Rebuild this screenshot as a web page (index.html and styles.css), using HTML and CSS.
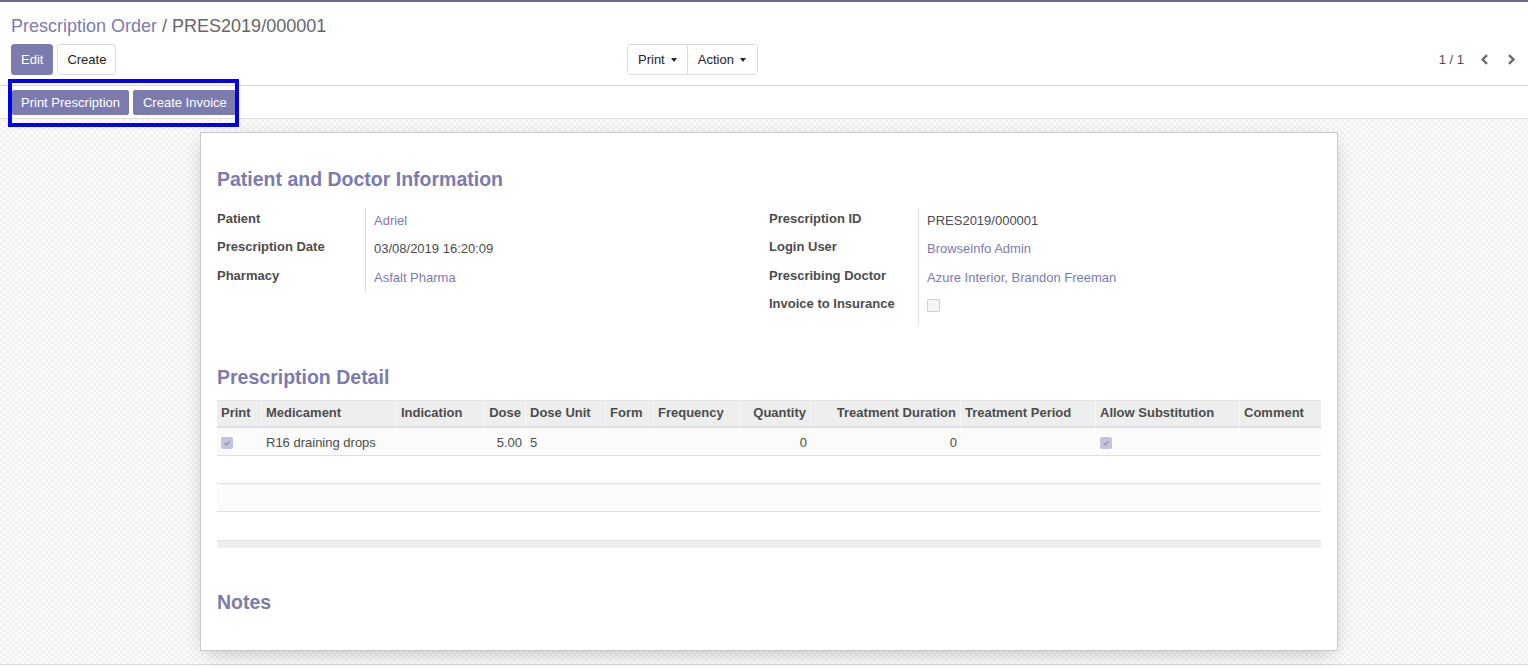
FILE: index.html
```html
<!DOCTYPE html>
<html lang="en">
<head>
<meta charset="utf-8">
<title>Prescription Order</title>
<link rel="stylesheet" href="styles.css">
</head>
<body>
<div class="control-panel">
  <div class="breadcrumb"><span class="bc-link">Prescription Order</span> / PRES2019/000001</div>
  <div class="cp-bottom">
    <div class="cp-buttons">
      <button class="btn btn-primary">Edit</button>
      <button class="btn btn-secondary">Create</button>
    </div>
    <div class="cp-sidebar">
      <button class="btn-dd">Print<span class="caret"></span></button>
      <button class="btn-dd">Action<span class="caret"></span></button>
    </div>
    <div class="pager">
      <span class="pager-value">1 / 1</span>
      <button class="pager-btn" aria-label="Previous"><svg width="9" height="11" viewBox="0 0 9 11"><path d="M7 1.2 L2.6 5.5 L7 9.8" fill="none" stroke="#6a6a6a" stroke-width="2.4"/></svg></button>
      <button class="pager-btn" aria-label="Next"><svg width="9" height="11" viewBox="0 0 9 11"><path d="M2 1.2 L6.4 5.5 L2 9.8" fill="none" stroke="#6a6a6a" stroke-width="2.4"/></svg></button>
    </div>
  </div>
</div>
<div class="statusbar">
  <button class="btn-sm">Print Prescription</button>
  <button class="btn-sm">Create Invoice</button>
</div>
<div class="highlight"></div>
<div class="form-area">
  <div class="sheet">
    <h2 class="section-title first">Patient and Doctor Information</h2>
    <div class="groups">
      <div class="group">
        <div class="g-label">Patient</div><div class="g-value link">Adriel</div>
        <div class="g-label">Prescription Date</div><div class="g-value">03/08/2019 16:20:09</div>
        <div class="g-label">Pharmacy</div><div class="g-value link">Asfalt Pharma</div>
      </div>
      <div class="group group-right">
        <div class="g-label">Prescription ID</div><div class="g-value">PRES2019/000001</div>
        <div class="g-label">Login User</div><div class="g-value link">Browseinfo Admin</div>
        <div class="g-label">Prescribing Doctor</div><div class="g-value link">Azure Interior, Brandon Freeman</div>
        <div class="g-label">Invoice to Insurance</div><div class="g-value"><span class="checkbox-empty"></span></div>
      </div>
    </div>
    <h2 class="section-title detail">Prescription Detail</h2>
    <table class="list">
      <colgroup>
        <col class="c-print"><col class="c-med"><col class="c-ind"><col class="c-dose"><col class="c-unit"><col class="c-form"><col class="c-freq"><col class="c-qty"><col class="c-dur"><col class="c-period"><col class="c-sub"><col class="c-comment">
      </colgroup>
      <thead>
        <tr>
          <th>Print</th><th>Medicament</th><th>Indication</th><th class="num">Dose</th><th>Dose Unit</th><th>Form</th><th>Frequency</th><th class="num">Quantity</th><th class="num">Treatment Duration</th><th>Treatment Period</th><th>Allow Substitution</th><th class="last">Comment</th>
        </tr>
      </thead>
      <tbody>
        <tr class="odd">
          <td><span class="checkbox-checked"><svg width="8" height="8" viewBox="0 0 8 8"><path d="M1.6 4.2 L3.3 5.8 L6.4 2.4" fill="none" stroke="#8c8bb8" stroke-width="1.2"/></svg></span></td>
          <td>R16 draining drops</td><td></td><td class="num">5.00</td><td>5</td><td></td><td></td><td class="num">0</td><td class="num">0</td><td></td>
          <td><span class="checkbox-checked"><svg width="8" height="8" viewBox="0 0 8 8"><path d="M1.6 4.2 L3.3 5.8 L6.4 2.4" fill="none" stroke="#8c8bb8" stroke-width="1.2"/></svg></span></td>
          <td></td>
        </tr>
        <tr><td colspan="12"></td></tr>
        <tr class="odd"><td colspan="12"></td></tr>
        <tr><td colspan="12"></td></tr>
      </tbody>
      <tfoot>
        <tr><td colspan="12"></td></tr>
      </tfoot>
    </table>
    <h2 class="section-title notes">Notes</h2>
  </div>
</div>
</body>
</html>
```

FILE: styles.css
```css
* { box-sizing: border-box; }

html, body {
  margin: 0;
  padding: 0;
  background: #ffffff;
}

body {
  font-family: "Liberation Sans", Arial, Helvetica, sans-serif;
  font-size: 13px;
  color: #4c4c4c;
  width: 1528px;
  height: 668px;
  overflow: hidden;
  position: relative;
}

button {
  font-family: inherit;
  font-size: 13px;
  cursor: pointer;
}

/* ---------- control panel ---------- */
.control-panel {
  height: 86px;
  border-top: 2px solid #6d6b96;
  border-bottom: 1px solid #d9d9d9;
  padding: 13px 3px 0 11px;
}

.breadcrumb {
  font-size: 18px;
  line-height: 22px;
  height: 22px;
  color: #666666;
  white-space: nowrap;
}

.bc-link {
  color: #7c7bad;
}

.cp-bottom {
  display: flex;
  align-items: center;
  margin-top: 7px;
  height: 31px;
}

.cp-buttons {
  display: flex;
  gap: 4px;
  width: 616px;
}

.btn {
  height: 31px;
  padding: 0 9px;
  line-height: 29px;
  border-radius: 3px;
  border: 1px solid;
}

.btn-primary {
  background: #7c7bad;
  border-color: #7c7bad;
  color: #ffffff;
}

.btn-secondary {
  background: #ffffff;
  border-color: #dcdcdc;
  color: #212529;
}

.cp-sidebar {
  display: flex;
  border: 1px solid #dcdcdc;
  border-radius: 3px;
  height: 31px;
}

.btn-dd {
  background: #ffffff;
  border: none;
  color: #212529;
  height: 29px;
  padding: 0 10px;
  line-height: 29px;
  display: flex;
  align-items: center;
}

.btn-dd + .btn-dd {
  border-left: 1px solid #dcdcdc;
  padding-right: 11px;
}

.caret {
  display: inline-block;
  margin-left: 6px;
  width: 0;
  height: 0;
  border-top: 4px solid #212529;
  border-left: 3.5px solid transparent;
  border-right: 3.5px solid transparent;
}

.pager {
  margin-left: auto;
  display: flex;
  align-items: center;
  height: 31px;
}

.pager-value {
  margin-right: 7px;
  color: #4c4c4c;
}

.pager-btn {
  background: none;
  border: none;
  padding: 0;
  width: 27px;
  height: 30px;
  display: flex;
  align-items: center;
  justify-content: center;
}

/* ---------- statusbar ---------- */
.statusbar {
  height: 33px;
  border-bottom: 1px solid #dddddd;
  padding: 4px 0 0 12px;
  display: flex;
  gap: 4px;
  align-items: flex-start;
}

.btn-sm {
  height: 25px;
  padding: 0 8px;
  line-height: 23px;
  background: #7c7bad;
  color: #ffffff;
  border: 1px solid #7c7bad;
  border-radius: 2px;
  white-space: nowrap;
}

.btn-sm + .btn-sm {
  padding-left: 9px;
}

.highlight {
  position: absolute;
  left: 8px;
  top: 79px;
  width: 231px;
  height: 48px;
  border: 4px solid #0000f5;
  pointer-events: none;
}

/* ---------- form area ---------- */
.form-area {
  height: 546px;
  border-bottom: 1px solid #d8d8d8;
  padding: 13px 0 0 10px;
  background-color: #fcfcfc;
  background-image: conic-gradient(#f2f2f2 25%, transparent 0 50%, #f2f2f2 0 75%, transparent 0);
  background-size: 6px 6px;
}

.sheet {
  width: 1138px;
  margin: 0 auto;
  background: #ffffff;
  border: 1px solid #c8c8d3;
  box-shadow: 0 5px 20px -6px rgba(0, 0, 0, 0.3);
  padding: 16px 16px 36px 16px;
}

.section-title {
  margin: 0;
  font-size: 19.5px;
  line-height: 24px;
  font-weight: bold;
  color: #7c7bad;
}

.section-title.first { margin-top: 18px; }
.section-title.detail { margin-top: 40px; }
.section-title.notes { margin-top: 42px; }

.groups {
  display: flex;
  margin-top: 17px;
}

.group {
  width: 552px;
  display: grid;
  grid-template-columns: 148px 1fr;
  grid-auto-rows: 28.33px;
  align-content: start;
}

.group-right {
  grid-template-columns: 149px 1fr;
  grid-template-rows: 28.33px 28.33px 28.33px 32px;
}

.g-label {
  font-weight: bold;
  color: #4c4c4c;
  line-height: 18px;
  padding-top: 2px;
  white-space: nowrap;
}

.g-value {
  border-left: 1px solid #dcdcdc;
  padding: 4px 0 0 8px;
  line-height: 18px;
  color: #4c4c4c;
}

.g-value.link {
  color: #7c7bad;
}

.checkbox-empty {
  display: block;
  width: 13px;
  height: 13px;
  margin-top: 2px;
  border: 1px solid #d2d2d2;
  background: #f5f5f5;
  border-radius: 1px;
}

/* ---------- list ---------- */
.list {
  margin-top: 11px;
  width: 1104px;
  table-layout: fixed;
  border-collapse: separate;
  border-spacing: 0;
}

.c-print { width: 45px; }
.c-med { width: 135px; }
.c-ind { width: 88px; }
.c-dose { width: 41px; }
.c-unit { width: 80px; }
.c-form { width: 48px; }
.c-freq { width: 87px; }
.c-qty { width: 70px; }
.c-dur { width: 150px; }
.c-period { width: 135px; }
.c-sub { width: 144px; }
.c-comment { width: 81px; }

.list th {
  background: #eeeeee;
  height: 28px;
  border-top: 1px solid #e2e2e2;
  border-bottom: 2px solid #dedee6;
  border-right: 1px solid #f7f7f7;
  padding: 0 4px 2px 4px;
  text-align: left;
  font-weight: bold;
  color: #4c4c4c;
  white-space: nowrap;
  overflow: hidden;
}

.list th.last { border-right: none; }

.list .num { text-align: right; }

.list td {
  height: 28px;
  padding: 2px 4px 0 4px;
  border-bottom: 1px solid #dedee6;
  color: #4c4c4c;
  white-space: nowrap;
  vertical-align: middle;
}

.list tbody tr.odd td {
  background: #fbfbfb;
}

.list tfoot td {
  height: 8px;
  background: #eeeeee;
  border-bottom: none;
  border-top: 1px solid #e2e2e2;
  padding: 0;
}

.list tbody tr:last-child td {
  border-bottom: none;
}

.checkbox-checked {
  display: flex;
  align-items: center;
  justify-content: center;
  width: 12px;
  height: 12px;
  border-radius: 2px;
  background: #c4c3dd;
  margin-top: 1px;
}
```
